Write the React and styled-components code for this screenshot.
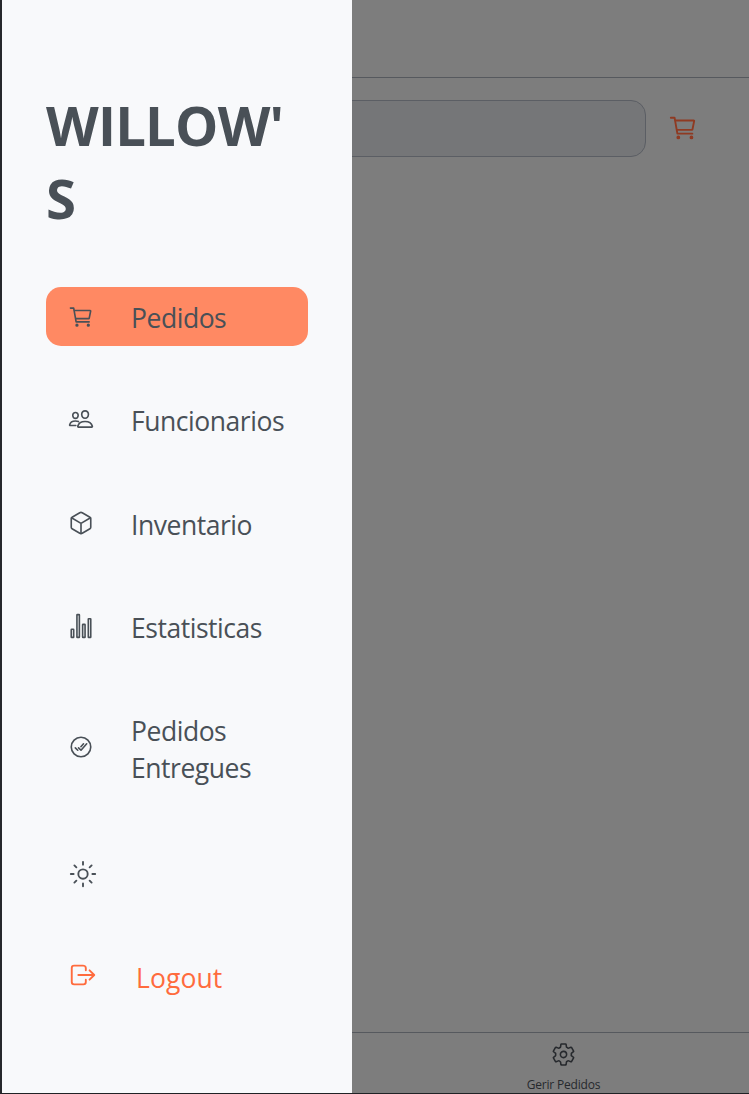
import React from "react";
import styled, { createGlobalStyle } from "styled-components";
import {
  IoCartOutline,
  IoPeopleOutline,
  IoCubeOutline,
  IoStatsChartOutline,
  IoCheckmarkDoneCircleOutline,
  IoSunnyOutline,
  IoLogOutOutline,
  IoSettingsOutline,
} from "react-icons/io5";

const GlobalStyle = createGlobalStyle`
  *, *::before, *::after { box-sizing: border-box; }
  body {
    margin: 0;
    background: #fff;
    font-family: "Open Sans", "Noto Sans", sans-serif;
    overflow: hidden;
  }
`;

const Screen = styled.div`
  position: relative;
  height: 1094px;
  border-left: 2px solid #26282c;
  border-bottom: 1px solid #202225;
`;

const Page = styled.div`
  display: flex;
  flex-direction: column;
  height: 100%;
  background: #7d7d7d;
`;

const Header = styled.header`
  height: 78px;
  border-bottom: 1px solid #56595e;
`;

const SearchRow = styled.div`
  display: flex;
  flex: 1;
  align-items: flex-start;
  padding: 22px 51px 0 44px;
`;

const SearchField = styled.div`
  flex: 1;
  height: 57px;
  border: 1px solid #5b5e64;
  border-radius: 15px;
  background: #757678;
`;

const CartButton = styled.div`
  display: flex;
  margin: 13px 0 0 22px;
  color: #8f3a22;
  font-size: 30px;
`;

const BottomBar = styled.footer`
  display: flex;
  height: 61px;
  padding-left: 375px;
  border-top: 1px solid #56595e;
`;

const BottomTab = styled.div`
  display: flex;
  flex: 1;
  flex-direction: column;
  align-items: center;
  padding: 9px 0 0 1px;
  color: #26292d;
  font-size: 12px;
  line-height: 16px;
  letter-spacing: -0.18px;
  white-space: nowrap;

  svg { font-size: 25px; margin-bottom: 10px; flex: none; }
`;

const Drawer = styled.aside`
  position: absolute;
  top: 0;
  left: 0;
  width: 350px;
  height: 100%;
  padding: 89px 44px 0;
  background: #f8f9fb;
  color: #495057;
`;

const Brand = styled.h1`
  width: 250px;
  margin: 0 0 52px;
  font-size: 54.5px;
  line-height: 73px;
  font-weight: 700;
  letter-spacing: -0.8px;
  overflow-wrap: anywhere;
`;

const Menu = styled.nav`
  display: flex;
  flex-direction: column;
  gap: 44.33px;
`;

const Item = styled.div`
  display: flex;
  align-items: center;
  width: 262px;
  min-height: ${(p) => p.$height || 59}px;
  padding: 13px 0 9px 22px;
  border-radius: 15px;
  background: ${(p) => (p.$active ? "#ff8963" : "transparent")};
  color: ${(p) => (p.$danger ? "#ff6b3d" : "inherit")};
`;

const IconSlot = styled.span`
  display: flex;
  width: ${(p) => p.$width || 63}px;
  padding-bottom: ${(p) => p.$lift || 0}px;
  font-size: ${(p) => p.$size || 26}px;
`;

const Label = styled.span`
  width: 170px;
  font-size: 26.5px;
  line-height: 37px;
  letter-spacing: ${(p) => p.$tracking ?? -0.46}px;
`;

const items = [
  { icon: IoCartOutline, label: "Pedidos", active: true, lift: 4 },
  { icon: IoPeopleOutline, label: "Funcionarios", lift: 5 },
  { icon: IoCubeOutline, label: "Inventario", lift: 5 },
  { icon: IoStatsChartOutline, label: "Estatisticas", lift: 4 },
  { icon: IoCheckmarkDoneCircleOutline, label: "Pedidos Entregues", lift: 6 },
];

export default function App() {
  return (
    <>
      <GlobalStyle />
      <Screen>
        <Page>
          <Header />
          <SearchRow>
            <SearchField />
            <CartButton><IoCartOutline /></CartButton>
          </SearchRow>
          <BottomBar>
            <BottomTab>
              <IoSettingsOutline />
              Gerir Pedidos
            </BottomTab>
          </BottomBar>
        </Page>
        <Drawer>
          <Brand>WILLOW'S</Brand>
          <Menu>
            {items.map(({ icon: Icon, label, active, lift }) => (
              <Item key={label} $active={active}>
                <IconSlot $lift={lift}><Icon /></IconSlot>
                <Label>{label}</Label>
              </Item>
            ))}
            <Item $height={62}>
              <IconSlot $size={30}><IoSunnyOutline /></IconSlot>
            </Item>
            <Item $danger>
              <IconSlot $size={30} $width={68} $lift={7}><IoLogOutOutline /></IconSlot>
              <Label $tracking={0.1}>Logout</Label>
            </Item>
          </Menu>
        </Drawer>
      </Screen>
    </>
  );
}
